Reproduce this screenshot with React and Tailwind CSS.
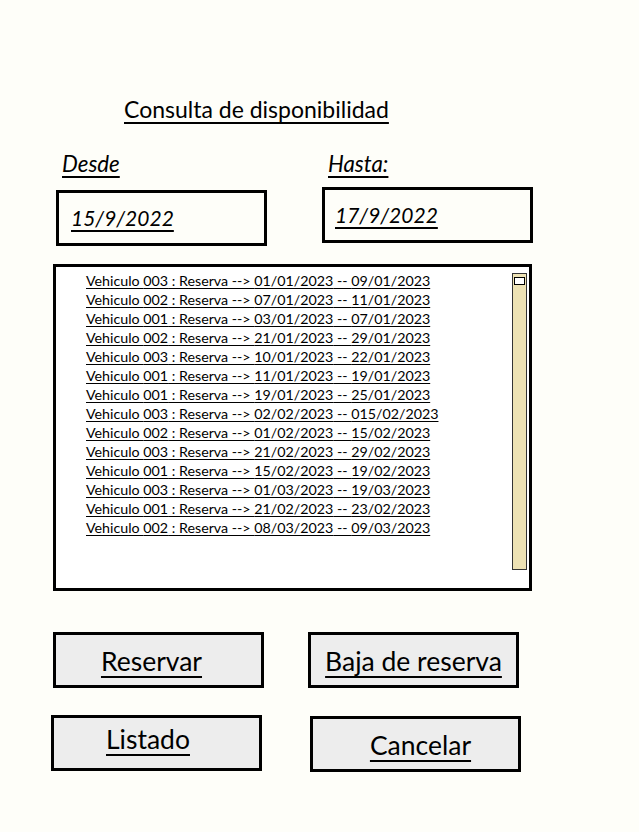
const reservas = [
  ["003", "01/01/2023", "09/01/2023"],
  ["002", "07/01/2023", "11/01/2023"],
  ["001", "03/01/2023", "07/01/2023"],
  ["002", "21/01/2023", "29/01/2023"],
  ["003", "10/01/2023", "22/01/2023"],
  ["001", "11/01/2023", "19/01/2023"],
  ["001", "19/01/2023", "25/01/2023"],
  ["003", "02/02/2023", "015/02/2023"],
  ["002", "01/02/2023", "15/02/2023"],
  ["003", "21/02/2023", "29/02/2023"],
  ["001", "15/02/2023", "19/02/2023"],
  ["003", "01/03/2023", "19/03/2023"],
  ["001", "21/02/2023", "23/02/2023"],
  ["002", "08/03/2023", "09/03/2023"],
];

function Boton({ label, className }) {
  return (
    <button
      className={`w-[211px] h-[56px] border-[3px] border-black bg-[#ededed] text-[26.5px] leading-[32px] text-black underline underline-offset-[5px] decoration-2 ${className}`}
    >
      {label}
    </button>
  );
}

export default function App() {
  return (
    <div className="w-[639px] h-[832px] bg-[#fefef9] font-['Lato',sans-serif] text-black overflow-hidden">
      {/* Titulo */}
      <div className="pt-[95px] pl-[124px] text-[23px] leading-[28px] underline underline-offset-4 decoration-2">
        Consulta de disponibilidad
      </div>

      {/* Fechas */}
      <div className="flex mt-[28px] h-[26px] text-[22.3px] leading-[26px] italic">
        <div className="ml-[62px] w-[266px]">
          <span className="underline underline-offset-4 decoration-2">Desde</span>
        </div>
        <div>
          <span className="underline underline-offset-4 decoration-2">Hasta:</span>
        </div>
      </div>
      <div className="flex items-start mt-[10px] text-[21px] italic">
        <div className="ml-[56px] mt-[3px] w-[211px] h-[56px] border-[3px] border-black flex items-center pl-[12px]">
          <span className="underline underline-offset-4 decoration-2">15/9/2022</span>
        </div>
        <div className="ml-[55px] w-[211px] h-[56px] border-[3px] border-black flex items-center pl-[10px]">
          <span className="underline underline-offset-4 decoration-2">17/9/2022</span>
        </div>
      </div>

      {/* Lista */}
      <div className="ml-[53px] mt-[18px] w-[479px] h-[327px] border-[3px] border-black bg-white flex">
        <ul className="flex-1 pl-[30px] pt-[4px] text-[14.25px] leading-[19px]">
          {reservas.map(([v, d, h], i) => (
            <li key={i}>
              <span className="underline underline-offset-2 decoration-1">
                Vehiculo {v} : Reserva --&gt; {d} -- {h}
              </span>
            </li>
          ))}
        </ul>
        <div className="mt-[6px] mr-[2px] w-[15px] h-[297px] bg-[#ede2b4] border border-[#333] flex justify-center pt-[3px]">
          <div className="w-[11px] h-[8px] bg-white border border-black" />
        </div>
      </div>

      {/* Botones */}
      <div className="flex mt-[41px]">
        <Boton label="Reservar" className="ml-[53px] pr-[14px] pt-[2px]" />
        <Boton label="Baja de reserva" className="ml-[44px] pt-[2px]" />
      </div>
      <div className="flex items-start mt-[27px]">
        <Boton label="Listado" className="ml-[51px] pr-[17px] pb-[8px]" />
        <Boton label="Cancelar" className="ml-[48px] mt-[1px] pl-[10px] pt-[2px]" />
      </div>
    </div>
  );
}
